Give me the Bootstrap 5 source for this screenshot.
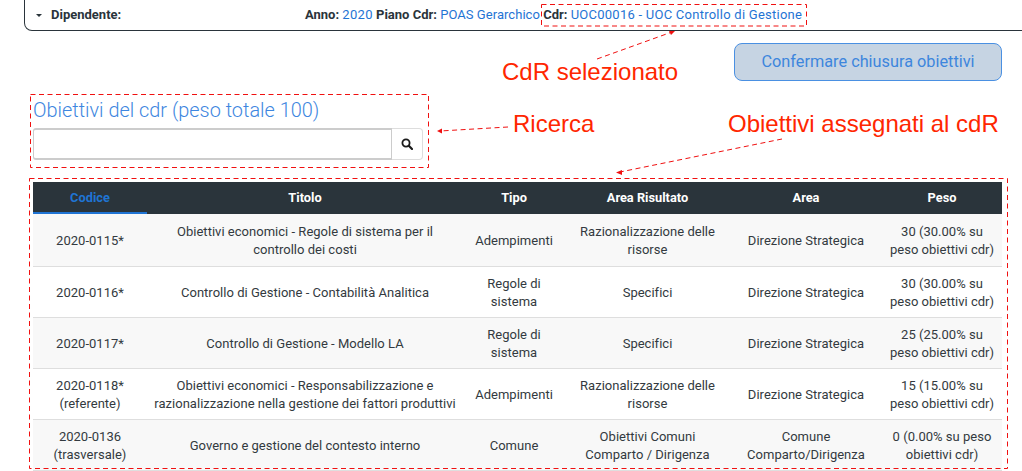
<!DOCTYPE html>
<html lang="it">
<head>
<meta charset="utf-8">
<title>Obiettivi del cdr</title>
<link href="https://cdn.jsdelivr.net/npm/bootstrap@5.3.0/dist/css/bootstrap.min.css" rel="stylesheet">
<style>
html,body{height:471px;overflow:hidden}
body{font-family:Roboto,"Liberation Sans",sans-serif;font-size:13px;color:#333a40;background:#fff;position:relative}
a{color:#1f74d4;text-decoration:none}
.topbar{margin-left:24px;margin-right:-12px;height:31px;border:1px solid #2a343b;border-top:0;border-radius:0 0 8px 8px;padding:0 12px 0 11px}
.topbar b{color:#2a343b;font-weight:700}
.caret-ico{width:0;height:0;border-left:3.5px solid transparent;border-right:3.5px solid transparent;border-top:3.5px solid #2a343b;margin-right:9px}
.infos{position:absolute;left:305px;top:0;height:30px;white-space:nowrap}
.infos .wide{letter-spacing:.25px}
.infos .wider{letter-spacing:.3px}
.infos .slight{letter-spacing:.05px}
.page-body{padding:12px 20px 0 33px}
.btn-close-obj{width:268px;height:38px;background:#c6d4e3;border:1px solid #4a90e2;color:#3d86dd;font-size:16.3px;border-radius:8px;padding:0}
.btn-close-obj:disabled{background:#c6d4e3;border-color:#4a90e2;color:#3d86dd;opacity:1}
.ttl{font-size:19.9px;font-weight:300;color:#3d86e0;line-height:24px;margin:18px 0 5px;height:24px}
.search-row{width:390px;height:32px}
.search-row .form-control{height:32px;border:1px solid #ccc;border-width:2px 2px 2px 1px;border-radius:3px 0 0 3px;box-shadow:none}
.search-row .btn{width:31px;height:32px;border:1px solid #ddd;border-left:0;border-radius:0 4px 4px 0;padding:0;background:#fff}
.tbl-wrap{margin-top:22px}
table.obj-tbl{table-layout:fixed;width:969px;margin:0;font-size:13px;letter-spacing:.02px;color:#333a40;border-collapse:collapse}
.obj-tbl thead th{background:#2a343b;color:#fff;height:32px;padding:0 6px;font-size:12.8px;letter-spacing:0;font-weight:700;text-align:center;vertical-align:middle;border:0}
.obj-tbl thead th.sel{color:#1f74d4;box-shadow:inset 0 -2px 0 #1f74d4}
.obj-tbl td{height:51px;padding:2px 6px 0;line-height:18px;text-align:center;vertical-align:middle;border:0;border-bottom:1px solid #dedede;background:#fff;color:#333a40}
.obj-tbl tbody tr:first-child td{height:52px}
.obj-tbl tr.alt td{background:#f8f8f8}
.c1{width:114px}.c2{width:316px}.c3{width:102px}.c4{width:165px}.c5{width:152px}.c6{width:120px}
.notes{position:absolute;left:0;top:0;pointer-events:none}
.note{position:absolute;color:#ff2600;font-family:"Liberation Sans",sans-serif;font-size:24px;line-height:28px;white-space:nowrap}
.n1{left:502px;top:58px}
.n2{left:513px;top:110px}
.n3{left:728px;top:110px}
</style>
</head>
<body>
<div class="topbar d-flex align-items-center">
  <span class="caret-ico"></span><b>Dipendente:</b>
  <div class="infos d-flex align-items-center"><b>Anno:</b>&nbsp;<a class="wider" href="#">2020</a>&nbsp;<b>Piano Cdr:</b>&nbsp;<a class="slight" href="#">POAS Gerarchico</a>&nbsp;<b>Cdr:</b>&nbsp;<a class="wide" href="#">UOC00016 - UOC Controllo di Gestione</a></div>
</div>
<div class="page-body">
  <div class="d-flex justify-content-end">
    <button class="btn btn-close-obj" type="button" disabled>Confermare chiusura obiettivi</button>
  </div>
  <h5 class="ttl">Obiettivi del cdr (peso totale 100)</h5>
  <div class="input-group search-row">
    <input class="form-control" type="text" aria-label="Ricerca">
    <button class="btn d-flex align-items-center justify-content-center" type="button" aria-label="Cerca">
      <svg width="12" height="12" viewBox="0 0 12 12" fill="none" stroke="#1b1b1b"><circle cx="5" cy="5" r="3.6" stroke-width="1.8"/><path d="M7.8 7.8 11 11" stroke-width="2.2" stroke-linecap="round"/></svg>
    </button>
  </div>
  <div class="tbl-wrap">
    <table class="table obj-tbl">
      <colgroup><col class="c1"><col class="c2"><col class="c3"><col class="c4"><col class="c5"><col class="c6"></colgroup>
      <thead><tr><th class="sel">Codice</th><th>Titolo</th><th>Tipo</th><th>Area Risultato</th><th>Area</th><th>Peso</th></tr></thead>
      <tbody>
        <tr class="alt"><td>2020-0115*</td><td>Obiettivi economici - Regole di sistema per il controllo dei costi</td><td>Adempimenti</td><td>Razionalizzazione delle risorse</td><td>Direzione Strategica</td><td>30 (30.00% su peso obiettivi cdr)</td></tr>
        <tr><td>2020-0116*</td><td>Controllo di Gestione - Contabilità Analitica</td><td>Regole di sistema</td><td>Specifici</td><td>Direzione Strategica</td><td>30 (30.00% su peso obiettivi cdr)</td></tr>
        <tr class="alt"><td>2020-0117*</td><td>Controllo di Gestione - Modello LA</td><td>Regole di sistema</td><td>Specifici</td><td>Direzione Strategica</td><td>25 (25.00% su peso obiettivi cdr)</td></tr>
        <tr><td>2020-0118*<br>(referente)</td><td>Obiettivi economici - Responsabilizzazione e razionalizzazione nella gestione dei fattori produttivi</td><td>Adempimenti</td><td>Razionalizzazione delle risorse</td><td>Direzione Strategica</td><td>15 (15.00% su peso obiettivi cdr)</td></tr>
        <tr class="alt"><td>2020-0136<br>(trasversale)</td><td>Governo e gestione del contesto interno</td><td>Comune</td><td>Obiettivi Comuni Comparto / Dirigenza</td><td>Comune Comparto/Dirigenza</td><td>0 (0.00% su peso obiettivi cdr)</td></tr>
      </tbody>
    </table>
  </div>
</div>
<svg class="notes" width="1022" height="471" viewBox="0 0 1022 471" fill="none" stroke="#f01010">
  <g stroke-width="1" stroke-dasharray="5 3.5">
    <rect x="541.5" y="4.5" width="265" height="21.5"/>
    <rect x="30.5" y="94.5" width="398" height="73"/>
    <rect x="29.5" y="178.5" width="978" height="290"/>
    <path d="M597 59 672 32M508 127 440 131M782 139 620 172"/>
  </g>
  <g fill="#f01010" stroke="none">
    <path d="M675 31 669 31 671 35Z"/>
    <path d="M437 131 442 128.500 442 133.500Z"/>
    <path d="M616 172.500 622 170 622 175Z"/>
  </g>
</svg>
<span class="note n1">CdR selezionato</span>
<span class="note n2">Ricerca</span>
<span class="note n3">Obiettivi assegnati al cdR</span>
<script src="https://cdn.jsdelivr.net/npm/bootstrap@5.3.0/dist/js/bootstrap.bundle.min.js"></script>
</body>
</html>
